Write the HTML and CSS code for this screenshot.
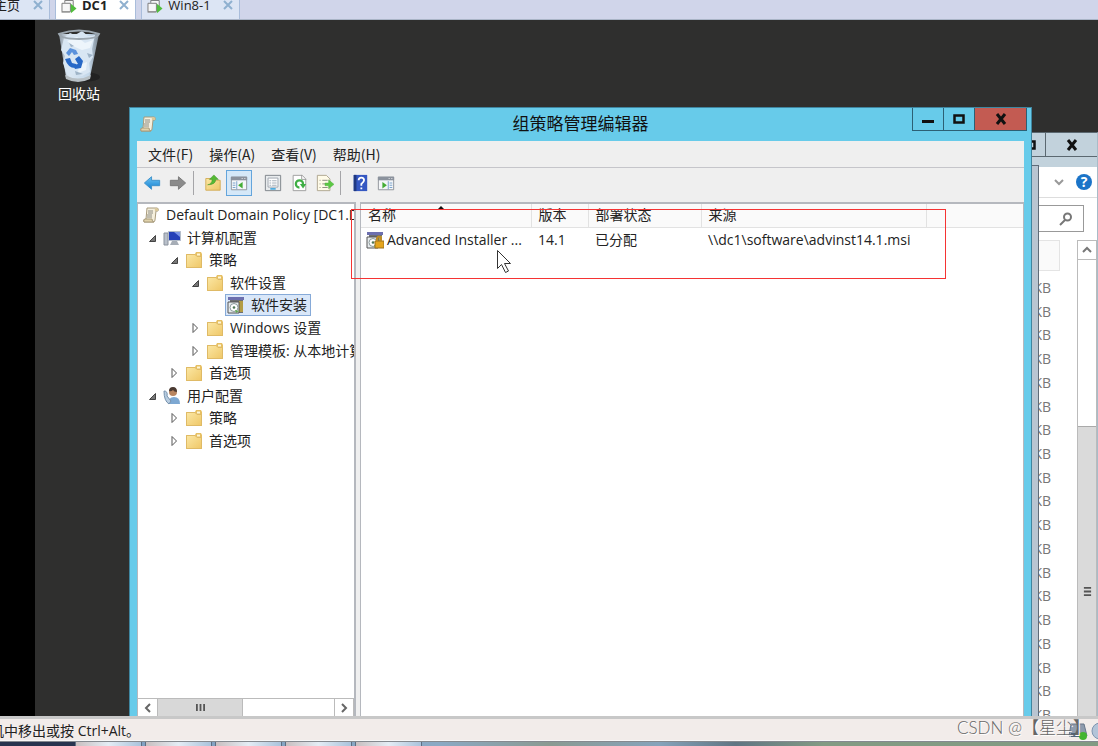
FILE: index.html
```
<!DOCTYPE html>
<html lang="zh-CN">
<head>
	<meta charset="UTF-8">
	<title>组策略管理编辑器</title>
	<link rel="stylesheet" href="styles.css">
</head>
<body>
	<svg class="defs" aria-hidden="true">
		<defs>
			<linearGradient id="gold" x1="0" y1="0" x2="1" y2="1">
				<stop offset="0" stop-color="#fbe7a4"/><stop offset="1" stop-color="#efc767"/>
			</linearGradient>
			<linearGradient id="blue" x1="0" y1="0" x2="0" y2="1">
				<stop offset="0" stop-color="#6cc4f4"/><stop offset="1" stop-color="#1580cf"/>
			</linearGradient>
			<linearGradient id="glass" x1="0" y1="0" x2="1" y2="0">
				<stop offset="0" stop-color="#8e9aa5"/><stop offset="0.25" stop-color="#dce8f3"/><stop offset="0.75" stop-color="#c4d8ea"/><stop offset="1" stop-color="#77828c"/>
			</linearGradient>
			<symbol id="folder" viewBox="0 0 18 18">
				<path d="M1 3h9l1-2h5l1 2v14H1z" fill="#e6bf63"/>
				<path d="M1.500 3.500h8.500l2 2h4.500v11h-15z" fill="url(#gold)" stroke="#dfba66"/>
				<path d="M12 2.500h3v2h-3z" fill="#fff6d6"/>
			</symbol>
			<symbol id="scroll" viewBox="0 0 18 18">
				<path d="M5 2h10q2 0 1 3h-2l-1 9q0 2-2 2H2q-1-3 2-3z" fill="#f5efdc" stroke="#a89b7d"/>
				<path d="M2 16q-1-3 1-3h7q0 3 2 3z" fill="#e1d3ab" stroke="#a89b7d"/>
				<path d="M13 5q-1-3 2-3 2 1 1 3z" fill="#dac89a"/>
				<path d="M6 5h5M6 7h5M5 9h5M5 11h5" stroke="#8c8c84"/>
			</symbol>
			<symbol id="package" viewBox="0 0 18 18">
				<path d="M1 1h16v3H1z" fill="#6c6fae"/>
				<path d="M3 4h13v13H3z" fill="#6d6f72"/>
				<path d="M12 5h4v11h-4z" fill="#b39d45"/>
				<path d="M1 6h11v11H1z" fill="#e9edef" stroke="#555"/>
				<circle cx="7" cy="11.500" r="4" fill="#fff" stroke="#8b9a9c"/>
				<circle cx="7" cy="11.500" r="1.300" fill="#4d7755"/>
				<path d="M8 14l4 1-3 2z" fill="#61a954"/>
			</symbol>
			<symbol id="vm" viewBox="0 0 18 16">
				<path d="M4.500 3V.5h9V9M1.500 3.500h9v9h-9z" fill="#f7f7f7" stroke="#777"/>
				<path d="M1 13h9" stroke="#999"/>
				<path d="M11 4l6 5-6 5z" fill="#51bd3d"/>
			</symbol>
			<symbol id="cross" viewBox="0 0 10 10">
				<path d="M1 1l8 8M9 1L1 9" stroke="#8fb0cf" stroke-width="2"/>
			</symbol>
			<symbol id="open" viewBox="0 0 10 10">
				<path d="M8.500 2.500v6h-6z" fill="#777" stroke="#444"/>
			</symbol>
			<symbol id="closed" viewBox="0 0 10 10">
				<path d="M3 .5v9l4.500-4.500z" fill="#fff" stroke="#555"/>
			</symbol>
		</defs>
	</svg>

	<nav class="tabs">
		<button class="tab home"><span>主页</span><svg class="x"><use href="#cross"/></svg></button>
		<button class="tab active"><svg class="vm"><use href="#vm"/></svg><span>DC1</span><svg class="x"><use href="#cross"/></svg></button>
		<button class="tab"><svg class="vm"><use href="#vm"/></svg><span>Win8-1</span><svg class="x"><use href="#cross"/></svg></button>
	</nav>

	<main class="desktop">
		<a class="recycle" href="#">
			<svg viewBox="0 0 44 54">
				<ellipse cx="26" cy="48" rx="17" ry="5" fill="#222"/>
				<path d="M2 5l7 43q12 7 24 0L42 5z" fill="url(#glass)"/>
				<path d="M7 9l6-5 5 2 7-4 6 5 7-1-3 14 1 8-4 6 1 9-8 4-7-2-8 1-4-12 2-7-4-6z" fill="#d8e6f3"/>
				<path d="M10 12l10-4 8 6 8-3-3 8-8 2-7-3zM22 36l8-3-1 8-8 3z" fill="#edf5fb"/>
				<path d="M30 24l6 2-4 3zM12 14l5 3-3 1zM18 42l8 3-7 1z" fill="#9fb4c7"/>
				<path d="M9 24l4-5 6 2 2 4-4 1-2-3-3 4z" fill="#5b92dc"/>
				<path d="M8 30l5-1 2 5 4 1-1 4q-7 0-10-9zM18 30l4-3 4 5-2 7-6 1-2-4 5-1z" fill="#2869c7"/>
				<path d="M2 5q20-7 40 0-2 5-20 5T2 5z" fill="none" stroke="#9ca7b0" stroke-width="2"/>
				<path d="M8 46q13 7 26 0l-1 4q-12 6-24 0z" fill="#b8c0c5"/>
			</svg>
			<span>回收站</span>
		</a>

		<section class="window explorer">
			<div class="titlebar">
				<button aria-label="最大化"><svg viewBox="0 0 12 12"><path d="M1.500 2.500h9v7h-9z" fill="none" stroke="#111" stroke-width="2.500"/></svg></button>
				<button class="wide" aria-label="关闭"><svg viewBox="0 0 12 12"><path d="M2 1l8 10M10 1L2 11" stroke="#111" stroke-width="3"/></svg></button>
			</div>
			<div class="ribbon">
				<svg class="chev" viewBox="0 0 12 12"><path d="M2 4l4 4 4-4" fill="none" stroke="#999" stroke-width="2"/></svg>
				<button class="help" aria-label="帮助">?</button>
			</div>
			<div class="searchrow">
				<input type="text" aria-label="搜索">
				<svg viewBox="0 0 14 14"><circle cx="8.500" cy="5" r="3.500" fill="none" stroke="#777" stroke-width="2"/><path d="M6 8l-5 5" stroke="#777" stroke-width="2"/></svg>
			</div>
			<div class="files">
				<div class="sizes">
					<div class="sizehead"></div>
					<ul>
						<li>KB</li><li>KB</li><li>KB</li><li>KB</li><li>KB</li><li>KB</li><li>KB</li><li>KB</li><li>KB</li><li>KB</li>
						<li>KB</li><li>KB</li><li>KB</li><li>KB</li><li>KB</li><li>KB</li><li>KB</li><li>KB</li><li>KB</li>
					</ul>
				</div>
				<div class="vscroll">
					<button aria-label="向上"><svg viewBox="0 0 12 12"><path d="M2 8l4-4 4 4" fill="none" stroke="#777" stroke-width="2"/></svg></button>
					<div class="thumb"><svg viewBox="0 0 10 10"><path d="M1 1h8M1 5h8M1 9h8" stroke="#555" stroke-width="2"/></svg></div>
				</div>
			</div>
		</section>

		<div class="window behind"></div>

		<section class="window editor">
			<header class="titlebar">
				<svg class="appicon"><use href="#scroll"/></svg>
				<h1>组策略管理编辑器</h1>
				<div class="controls">
					<button aria-label="最小化"><svg viewBox="0 0 12 12"><path d="M0 8.500h12" stroke="#111" stroke-width="3"/></svg></button>
					<button aria-label="最大化"><svg viewBox="0 0 12 12"><path d="M1.500 2.500h9v7h-9z" fill="none" stroke="#111" stroke-width="2.500"/></svg></button>
					<button class="close" aria-label="关闭"><svg viewBox="0 0 12 12"><path d="M2 1l8 10M10 1L2 11" stroke="#111" stroke-width="3"/></svg></button>
				</div>
			</header>
			<div class="menu">
				<button>文件(F)</button>
				<button>操作(A)</button>
				<button>查看(V)</button>
				<button>帮助(H)</button>
			</div>
			<div class="toolbar">
				<button aria-label="后退"><svg viewBox="0 0 20 20"><path d="M1.500 10l8-7v4h9v6h-9v4z" fill="url(#blue)" stroke="#3a8fc8"/></svg></button>
				<button aria-label="前进"><svg viewBox="0 0 20 20"><path d="M18.500 10l-8-7v4h-9v6h9v4z" fill="#8b8b8b" stroke="#777"/></svg></button>
				<i class="sep"></i>
				<button aria-label="上一级"><svg viewBox="0 0 20 20"><path d="M2 5h7l2 2h7v11H2z" fill="url(#gold)" stroke="#d3aa54"/><path d="M4 12q5-1 5-6H6l5-5 5 5h-3q0 6-9 6z" fill="#55b934" stroke="#378c24" stroke-width=".5"/></svg></button>
				<button class="on" aria-label="显示/隐藏控制台树"><svg viewBox="0 0 20 20"><path d="M1.500 3.500h17v14h-17z" fill="#f4f6f8" stroke="#8a8f95"/><path d="M1 3h18v4H1z" fill="#8b929d"/><path d="M13 5h1M16 5h1" stroke="#fff"/><path d="M7.500 8v9M3 10h3M3 12.500h3M3 15h3" stroke="#6f9cc8"/><path d="M14 9v7l-5-3.500z" fill="#44ad35"/></svg></button>
				<button class="prop" aria-label="属性"><svg viewBox="0 0 20 20"><path d="M1.500 1.500h17v17h-17z" fill="#e8ebed" stroke="#777d83"/><path d="M4.500 4.500h11v10h-11z" fill="#fff" stroke="#9aa1ab"/><path d="M6 7.500h2M9 7.500h5M6 10h2M9 10h5M6 12.500h2M9 12.500h5" stroke="#9aa6b1"/><path d="M7 16.500h6" stroke="#4eacdf" stroke-width="2"/></svg></button>
				<button aria-label="刷新"><svg viewBox="0 0 20 20"><path d="M3.500 1.500h10l4 4v13h-14z" fill="#fff" stroke="#999"/><path d="M13 1v5h5" fill="none" stroke="#999"/><path d="M14.500 11a4 4 0 1 0-4 4" fill="none" stroke="#3fae45" stroke-width="2.500"/><path d="M11 11h7l-3.500 5z" fill="#3fae45"/></svg></button>
				<button aria-label="导出列表"><svg viewBox="0 0 20 20"><path d="M1.500 1.500h10l4 4v13h-14z" fill="#fffbe8" stroke="#aaa28b"/><path d="M4 7h1M4 11h1M4 15h1M7 7h6M7 11h5M7 15h6" stroke="#868579"/><path d="M10 10h4V6.500l6 5-6 5V13h-4z" fill="#5cc844" stroke="#55a946" stroke-width=".5"/></svg></button>
				<i class="sep"></i>
				<button aria-label="帮助"><svg viewBox="0 0 20 20"><path d="M3 1h15v18H3z" fill="#3457c2"/><path d="M3 1h3v18H3z" fill="#203981"/><path d="M8.500 7q0-3 3-3t3 3q0 2-3 4v2M11.500 15v2" fill="none" stroke="#fff" stroke-width="2"/></svg></button>
				<button aria-label="显示/隐藏操作窗格"><svg viewBox="0 0 20 20"><path d="M1.500 3.500h17v14h-17z" fill="#f4f6f8" stroke="#8a8f95"/><path d="M1 3h18v4H1z" fill="#8b929d"/><path d="M13 5h1M16 5h1" stroke="#fff"/><path d="M12.500 8v9M14 10h3M14 12.500h3M14 15h3" stroke="#6f9cc8"/><path d="M6 9v7l5-3.500z" fill="#44ad35"/></svg></button>
			</div>
			<div class="panes">
				<div class="treepane">
					<ul class="tree">
						<li class="root"><svg class="ico"><use href="#scroll"/></svg><span>Default Domain Policy [DC1.D</span></li>
						<li class="l1"><svg class="arr"><use href="#open"/></svg><svg class="ico" viewBox="0 0 18 18"><path d="M1 4h4v12H1z" fill="#b9c0ca" stroke="#8a929d"/><path d="M5.500 2.500h12v9h-12z" fill="#2540b8" stroke="#b4bdc9"/><path d="M11 3h6v5z" fill="#7c95e6"/><path d="M9 12h5l2 4H7z" fill="#a6adb6"/></svg><span>计算机配置</span></li>
						<li class="l2"><svg class="arr"><use href="#open"/></svg><svg class="ico"><use href="#folder"/></svg><span>策略</span></li>
						<li class="l3"><svg class="arr"><use href="#open"/></svg><svg class="ico"><use href="#folder"/></svg><span>软件设置</span></li>
						<li class="l4"><div class="selected"><svg class="ico"><use href="#package"/></svg><span>软件安装</span></div></li>
						<li class="l3"><svg class="arr"><use href="#closed"/></svg><svg class="ico"><use href="#folder"/></svg><span>Windows 设置</span></li>
						<li class="l3"><svg class="arr"><use href="#closed"/></svg><svg class="ico"><use href="#folder"/></svg><span>管理模板: 从本地计算</span></li>
						<li class="l2"><svg class="arr"><use href="#closed"/></svg><svg class="ico"><use href="#folder"/></svg><span>首选项</span></li>
						<li class="l1"><svg class="arr"><use href="#open"/></svg><svg class="ico" viewBox="0 0 18 18"><path d="M6 17q-1-7 5-7 6 0 6 7z" fill="#7da8d2"/><circle cx="10" cy="5" r="4" fill="#b98560"/><path d="M6 4q0-4 4-4t4 5q-3 0-4-2-2 2-4 1z" fill="#4b3a32"/><path d="M1 4q4 0 3 5l4 5-2 3q-5-3-5-13z" fill="#b7cce0" stroke="#7792ad"/></svg><span>用户配置</span></li>
						<li class="l2"><svg class="arr"><use href="#closed"/></svg><svg class="ico"><use href="#folder"/></svg><span>策略</span></li>
						<li class="l2"><svg class="arr"><use href="#closed"/></svg><svg class="ico"><use href="#folder"/></svg><span>首选项</span></li>
					</ul>
					<div class="hscroll">
						<button aria-label="向左"><svg viewBox="0 0 12 12"><path d="M8 2L4 6l4 4" fill="none" stroke="#666" stroke-width="2"/></svg></button>
						<div class="thumb"><svg viewBox="0 0 10 10"><path d="M1 1v8M5 1v8M9 1v8" stroke="#555" stroke-width="2"/></svg></div>
						<button class="end" aria-label="向右"><svg viewBox="0 0 12 12"><path d="M4 2l4 4-4 4" fill="none" stroke="#666" stroke-width="2"/></svg></button>
					</div>
				</div>
				<div class="listpane">
					<table>
						<colgroup><col class="c-name"><col class="c-ver"><col class="c-state"><col class="c-src"><col></colgroup>
						<thead>
							<tr><th class="sorted">名称</th><th>版本</th><th>部署状态</th><th>来源</th><th></th></tr>
						</thead>
						<tbody>
							<tr>
								<td class="name"><div><svg class="ico" viewBox="0 0 18 18"><use href="#package"/><path d="M9 10h9v7H9z" fill="#e5a51d" stroke="#9b7323"/><path d="M11 10V7q2-3 4 0v3" fill="none" stroke="#bd8b25" stroke-width="2"/></svg><span>Advanced Installer ...</span></div></td>
								<td>14.1</td>
								<td>已分配</td>
								<td>\\dc1\software\advinst14.1.msi</td>
								<td></td>
							</tr>
						</tbody>
					</table>
				</div>
			</div>
		</section>

		<div class="highlight"></div>
		<svg class="cursor" viewBox="0 0 16 25"><path d="M1.500 1.500v18l4-4 4 8 3-1.500-4-7.500h6z" fill="#fff" stroke="#333"/></svg>
	</main>

	<footer class="status"><span>机中移出或按 Ctrl+Alt。</span>
		<svg class="tray" viewBox="0 0 40 20"><path d="M3 3h13l3 12H1z" fill="#8e9bad" stroke="#66768a"/><path d="M3 12h14v4H3z" fill="#526479"/><circle cx="15" cy="15" r="4" fill="#43b531"/><circle cx="32" cy="10" r="8" fill="#b3c4d8" stroke="#7e95b0"/></svg>
	</footer>
	<div class="taskbar"><i></i><i></i><i></i><i></i><i></i></div>
	<div class="watermark">CSDN @【星尘】</div>
</body>
</html>
```
FILE: styles.css
```
*{
	margin: 0;
	padding: 0;
	box-sizing: border-box;
}
body{
	height: 100vh;
	display: flex;
	flex-direction: column;
	overflow: hidden;
	position: relative;
	font: 14px/20px "Open Sans", "Noto Sans CJK SC", sans-serif;
	color: #222;
}
ul{
	list-style: none;
}
button{
	border: 0;
	background: none;
	font: inherit;
	color: inherit;
}
svg{
	flex: none;
	display: block;
}
.defs{
	position: absolute;
	width: 0;
	height: 0;
}

/* vm tabs */
.tabs{
	height: 20px;
	flex: none;
	display: flex;
	gap: 5px;
	background: #d0d5ea;
	border-bottom: 1px solid #a9b4c6;
	overflow: hidden;
}
.tab{
	height: 19px;
	display: flex;
	align-items: flex-start;
	padding: 0 6px 0 4px;
	gap: 4px;
	background: #dce5f4;
	border-right: 1px solid #a9bddb;
	border-left: 1px solid #a9bddb;
	line-height: 11px;
	font-size: 13px;
}
.tab.home{
	width: 50px;
	justify-content: flex-end;
	gap: 13px;
	border-left: 0;
}
.tab.home span{
	flex: none;
}
.tab.active{
	background: #fff;
	font-weight: bold;
}
.tab .vm{
	width: 18px;
	height: 15px;
}
.tab .x{
	width: 10px;
	height: 10px;
	margin-left: 8px;
}
.tab.home .x{
	margin-left: 0;
}

.desktop{
	flex: 1;
	min-height: 0;
	position: relative;
	overflow: hidden;
	background: #2f2f2e;
	border-left: 35px solid #000;
}
.recycle{
	position: absolute;
	left: 22px;
	top: 9px;
	width: 44px;
	color: #fff;
	text-decoration: none;
	text-align: center;
}
.recycle svg{
	width: 44px;
	height: 54px;
}
.recycle span{
	display: block;
	line-height: 22px;
	white-space: nowrap;
}
.window{
	position: absolute;
	bottom: 0;
}

/* explorer window at the back */
.explorer{
	top: 112px;
	left: 600px;
	right: 0;
	display: flex;
	flex-direction: column;
	background: #fff;
	border-top: 1px solid #5b6870;
	border-right: 1px solid #a8bcc8;
}
.explorer .titlebar{
	height: 34px;
	flex: none;
	display: flex;
	justify-content: flex-end;
	align-items: flex-start;
	background: #c2d2dc;
}
.explorer .titlebar button{
	width: 32px;
	height: 24px;
	display: flex;
	align-items: center;
	justify-content: center;
	border: 1px solid #5b6870;
	border-top: 0;
	border-right: 0;
}
.explorer .titlebar .wide{
	width: 52px;
}
.titlebar button svg{
	width: 12px;
	height: 12px;
}
.ribbon{
	height: 31px;
	flex: none;
	display: flex;
	align-items: center;
	justify-content: flex-end;
	gap: 11px;
	padding-right: 5px;
	border-bottom: 1px solid #ddd;
}
.chev{
	width: 12px;
	height: 12px;
}
.help{
	width: 16px;
	height: 16px;
	border-radius: 50%;
	background: #1b74c8;
	color: #fff;
	font-weight: bold;
	line-height: 16px;
}
.searchrow{
	height: 27px;
	margin: 7px 13px 0 0;
	flex: none;
	display: flex;
	align-items: center;
	padding-right: 10px;
	border: 1px solid #999;
}
.searchrow input{
	flex: 1;
	min-width: 0;
	height: 22px;
	border: 0;
	background: none;
}
.searchrow svg{
	width: 14px;
	height: 14px;
}
.files{
	flex: 1;
	min-height: 0;
	margin-top: 8px;
	display: flex;
	justify-content: space-between;
}
.sizes{
	flex: 1;
	padding-right: 17px;
	text-align: right;
}
.sizehead{
	height: 31px;
	margin-bottom: 5px;
	background: #fafafa;
	border: 1px solid #e4e4e4;
}
.sizes ul{
	height: 451px;
	display: grid;
	grid-auto-rows: 1fr;
	align-items: center;
	padding-right: 9px;
	color: #777;
}
.vscroll{
	width: 20px;
	display: flex;
	flex-direction: column;
	justify-content: space-between;
	border: 1px solid #bbb;
	border-bottom: 0;
}
.vscroll button{
	height: 19px;
	flex: none;
	display: flex;
	align-items: center;
	justify-content: center;
	border-bottom: 1px solid #bbb;
}
.vscroll button svg{
	width: 12px;
	height: 12px;
}
.vscroll .thumb{
	flex: 0 0 61%;
	display: flex;
	justify-content: center;
	padding-top: 160px;
	background: #dadada;
	border-top: 1px solid #aaa;
}
.thumb svg{
	width: 9px;
	height: 9px;
}
.behind{
	top: 145px;
	left: 600px;
	right: 59px;
	background: #b9c5d1;
	border: 1px solid #5f6b78;
	border-bottom: 0;
}

/* policy editor */
.editor{
	top: 87px;
	left: 94px;
	right: 66px;
	display: flex;
	flex-direction: column;
	padding: 0 7px;
	background: #67cbea;
	border: 1px solid #3f86a0;
	border-bottom: 0;
}
.editor .titlebar{
	height: 33px;
	flex: none;
	display: flex;
	align-items: flex-start;
}
.appicon{
	width: 18px;
	height: 18px;
	margin: 7px 0 0 2px;
}
.editor h1{
	flex: 1;
	padding-left: 92px;
	font-size: 17px;
	font-weight: normal;
	line-height: 32px;
	text-align: center;
	color: #111;
}
.controls{
	display: flex;
	border: 1px solid #2c6075;
	border-top: 0;
	margin-right: -3px;
}
.controls button{
	width: 31px;
	height: 22px;
	display: flex;
	align-items: center;
	justify-content: center;
	border-right: 1px solid #2c6075;
}
.controls .close{
	width: 51px;
	border-right: 0;
	background: #c35b52;
}
.menu{
	height: 27px;
	flex: none;
	display: flex;
	align-items: center;
	gap: 16px;
	padding: 0 11px;
	background: #efefef;
	border-bottom: 1px solid #c5c5ca;
	font-family: "Noto Sans CJK SC", sans-serif;
}
.toolbar{
	height: 34px;
	flex: none;
	display: flex;
	align-items: center;
	padding: 0 2px 4px;
	background: #efefef;
}
.toolbar button{
	width: 26px;
	height: 26px;
	display: flex;
	align-items: center;
	justify-content: center;
}
.toolbar button svg{
	width: 18px;
	height: 18px;
}
.toolbar .on{
	background: #d5e8f8;
	border: 1px solid #64a5dc;
}
.toolbar .prop{
	margin-left: 8px;
}
.sep{
	width: 1px;
	height: 24px;
	margin: 0 6px 0 2px;
	background: #a5a5a8;
}
.panes{
	flex: 1;
	min-height: 0;
	display: flex;
	gap: 4px;
	background: #efefef;
}
.treepane{
	width: 219px;
	flex: none;
	display: flex;
	flex-direction: column;
	justify-content: space-between;
	background: #fff;
	border: 2px solid #b5b8be;
	border-left-width: 1px;
	border-bottom: 0;
	overflow: hidden;
}
.tree{
	height: 248px;
	display: grid;
	grid-auto-rows: 1fr;
	white-space: nowrap;
}
.tree li{
	display: flex;
	align-items: center;
	min-height: 0;
}
.arr{
	width: 10px;
	height: 10px;
	margin-right: 6px;
}
.ico{
	width: 18px;
	height: 18px;
}
.tree span{
	padding-left: 6px;
}
.tree .root{
	padding-left: 4px;
}
.tree .l1{
	padding-left: 9px;
}
.tree .l2{
	padding-left: 31px;
}
.tree .l3{
	padding-left: 52px;
}
.tree .l4{
	padding-left: 87px;
}
.selected{
	height: 22px;
	display: flex;
	align-items: center;
	padding: 0 3px 0 1px;
	background: #d9e7f9;
	border: 1px solid #86aad8;
}
.hscroll{
	height: 18px;
	flex: none;
	display: flex;
	border-top: 1px solid #bbb;
}
.hscroll button{
	width: 20px;
	display: flex;
	align-items: center;
	justify-content: center;
	border-right: 1px solid #bbb;
}
.hscroll button svg{
	width: 12px;
	height: 12px;
}
.hscroll .thumb{
	width: 85px;
	display: flex;
	align-items: center;
	justify-content: center;
	background: #d8d8d8;
	border-right: 1px solid #bbb;
}
.hscroll .end{
	margin-left: auto;
	border-left: 1px solid #bbb;
}
.listpane{
	flex: 1;
	min-width: 0;
	background: #fff;
	border: 2px solid #b5b8be;
	border-width: 2px 1px 0;
}
table{
	width: 100%;
	table-layout: fixed;
	border-collapse: collapse;
}
.c-name{
	width: 170px;
}
.c-ver{
	width: 57px;
}
.c-state{
	width: 113px;
}
.c-src{
	width: 225px;
}
th{
	height: 23px;
	padding: 0 7px;
	background: #fafafa;
	border-right: 1px solid #e2e2e2;
	border-bottom: 1px solid #e2e2e2;
	font-weight: normal;
	text-align: left;
}
th:last-child{
	border-right: 0;
}
.sorted{
	position: relative;
}
.sorted::after{
	content: "";
	position: absolute;
	left: 45%;
	top: 2px;
	border: 4px solid transparent;
	border-top: 0;
	border-bottom-color: #111;
}
td{
	height: 25px;
	padding: 0 7px;
	white-space: nowrap;
}
td.name{
	padding: 0 0 0 5px;
}
td.name div{
	display: flex;
	align-items: center;
	gap: 3px;
}
.highlight{
	position: absolute;
	left: 316px;
	top: 189px;
	width: 595px;
	height: 70px;
	border: 1px solid #f53333;
}
.cursor{
	position: absolute;
	left: 461px;
	top: 229px;
	width: 16px;
	height: 25px;
}

/* bottom of the screen */
.status{
	height: 25px;
	flex: none;
	display: flex;
	align-items: center;
	justify-content: space-between;
	padding-top: 2px;
	background: #f2ecea;
	border-top: 3px solid #c8c8c8;
	border-bottom: 1px solid #f8f8f8;
}
.status span{
	margin-left: -10px;
}
.tray{
	width: 40px;
	height: 20px;
	margin-right: -10px;
}
.taskbar{
	height: 5px;
	flex: none;
	display: flex;
	gap: 3px;
	padding-left: 75px;
	background: linear-gradient(90deg, #27344f 0, #27344f 75px, #7f9fc2 76px, #8aa9c4 40%, #8a9a92 50%, #86a3bb 60%, #5f7583 67%, #839b84 75%, #829b83);
	border-top: 1px solid #84898f;
}
.taskbar i{
	width: 67px;
	background: linear-gradient(90deg, #c8bfc0, #e4edf5, #a9c3dc);
	border: 1px solid #5d6e82;
	border-width: 0 1px;
}
.watermark{
	position: absolute;
	right: 8px;
	bottom: 6px;
	font: 300 17px/24px Lato, "Noto Sans CJK SC", sans-serif;
	color: #666;
	text-shadow: 1px 1px 0 #fff;
}
```
